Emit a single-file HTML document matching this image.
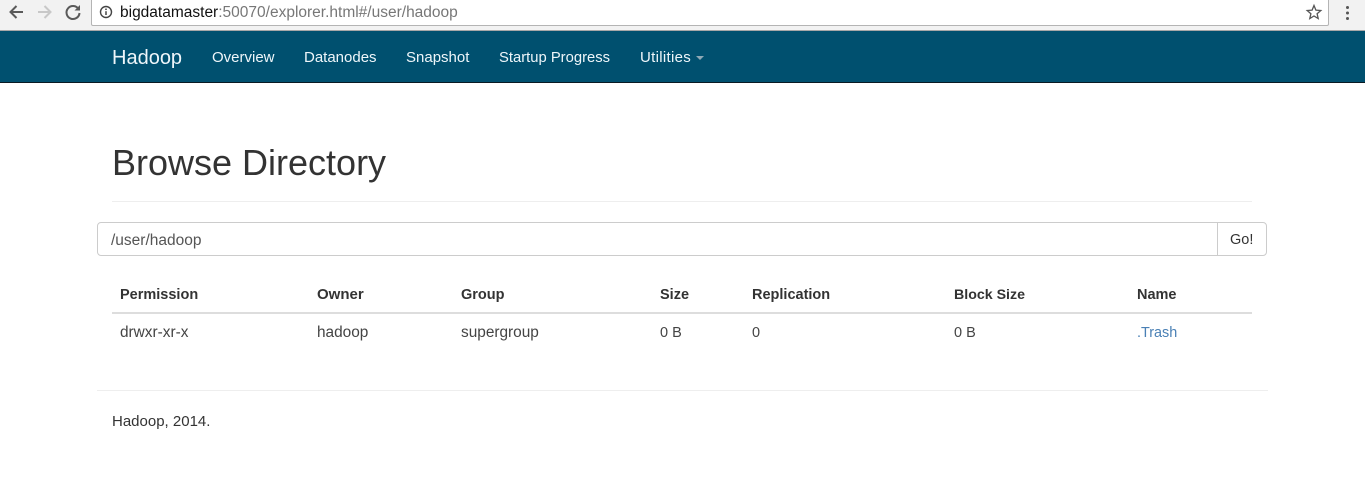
<!DOCTYPE html>
<html>
<head>
<meta charset="utf-8">
<style>
html,body{margin:0;padding:0;background:#fff;}
body{width:1365px;height:489px;overflow:hidden;position:relative;font-family:"Liberation Sans",sans-serif;color:#333;font-size:14px;}
.t{position:absolute;white-space:nowrap;line-height:20px;}
.b{position:absolute;}
.nav{color:#eef6fa;font-size:15px;top:48px;}
.th{font-weight:bold;top:285px;color:#333;font-size:14.5px;}
.td{top:323px;color:#444;font-size:15.4px;}
</style>
</head>
<body>
<div class="b" style="left:0;top:0;width:1365px;height:30px;background:#f2f2f2;"></div>
<div class="b" style="left:0;top:30px;width:1365px;height:1px;background:#a8a8a8;"></div>
<svg class="b" style="left:0;top:0" width="90" height="26" viewBox="0 0 90 26" fill="none">
<path d="M23 12H11M16.500 6L10.500 12L16.500 18" stroke="#5a5a5a" stroke-width="2"/>
<path d="M38 12H50M44.500 6L50.500 12L44.500 18" stroke="#c8c8c8" stroke-width="2"/>
<path d="M78.500 9A6.500 6.500 0 1 0 79.500 13" stroke="#5a5a5a" stroke-width="2"/>
<path d="M80 5V10.500H74.500Z" fill="#5a5a5a"/>
</svg>
<div class="b" style="left:91px;top:-2px;width:1236px;height:26px;background:#fff;border:1px solid #b4b4b4;border-radius:2px;"></div>
<svg class="b" style="left:98px;top:4px" width="16" height="16" viewBox="0 0 16 16" fill="none">
<circle cx="8" cy="8" r="5.500" stroke="#444" stroke-width="1.400"/>
<path d="M8 7.200V11" stroke="#444" stroke-width="1.500"/>
<circle cx="8" cy="5.300" r=".9" fill="#444"/>
</svg>
<div class="t" style="left:120px;top:3px;font-size:15.5px;color:#777;"><span style="color:#111">bigdatamaster</span>:50070/explorer.html#/user/hadoop</div>
<svg class="b" style="left:1305px;top:3px" width="18" height="18" viewBox="0 0 18 18" fill="none">
<path d="M9 2.500L10.900 7.100L15.800 7.500L12.100 10.700L13.200 15.500L9 13L4.800 15.500L5.900 10.700L2.200 7.500L7.100 7.100Z" stroke="#555" stroke-width="1.300"/>
</svg>
<div class="b" style="left:1346px;top:6px;width:3px;height:3px;border-radius:50%;background:#555;box-shadow:0 5.500px 0 #555,0 11px 0 #555;"></div>

<div class="b" style="left:0;top:31px;width:1365px;height:51px;background:#00506f;"></div>
<div class="b" style="left:0;top:82px;width:1365px;height:1px;background:#0a1a22;"></div>
<div class="t" style="left:112px;top:48px;font-size:20px;color:#eef6fa;">Hadoop</div>
<div class="t nav" style="left:212px;">Overview</div>
<div class="t nav" style="left:304px;">Datanodes</div>
<div class="t nav" style="left:406px;">Snapshot</div>
<div class="t nav" style="left:499px;font-size:14.800px;">Startup Progress</div>
<div class="t nav" style="left:640px;letter-spacing:.3px;">Utilities</div>
<div class="b" style="left:696px;top:56px;width:0;height:0;border-left:4px solid transparent;border-right:4px solid transparent;border-top:4px solid #8fa9b6;"></div>

<div class="t" style="left:112px;top:143px;font-size:36px;line-height:40px;color:#333;">Browse Directory</div>
<div class="b" style="left:112px;top:201px;width:1140px;height:1px;background:#eee;"></div>

<div class="b" style="left:97px;top:222px;width:1168px;height:32px;border:1px solid #ccc;border-radius:4px;"></div>
<div class="b" style="left:1217px;top:223px;width:1px;height:32px;background:#ccc;"></div>
<div class="t" style="left:111px;top:231px;color:#555;font-size:15.500px;">/user/hadoop</div>
<div class="t" style="left:1230px;top:230px;color:#333;font-size:14.500px;">Go!</div>

<div class="t th" style="left:120px;">Permission</div>
<div class="t th" style="left:317px;font-size:15px;">Owner</div>
<div class="t th" style="left:461px;">Group</div>
<div class="t th" style="left:660px;">Size</div>
<div class="t th" style="left:752px;">Replication</div>
<div class="t th" style="left:954px;font-size:14.200px;">Block Size</div>
<div class="t th" style="left:1137px;">Name</div>
<div class="b" style="left:112px;top:312px;width:1140px;height:2px;background:#ddd;"></div>

<div class="t td" style="left:120px;">drwxr-xr-x</div>
<div class="t td" style="left:317px;">hadoop</div>
<div class="t td" style="left:461px;">supergroup</div>
<div class="t td" style="left:660px;font-size:14.500px;">0 B</div>
<div class="t td" style="left:752px;font-size:14.500px;">0</div>
<div class="t td" style="left:954px;font-size:14.500px;">0 B</div>
<div class="t td" style="left:1137px;color:#4a80b5;font-size:14.400px;">.Trash</div>

<div class="b" style="left:97px;top:390px;width:1171px;height:1px;background:#eee;"></div>
<div class="t" style="left:112px;top:412px;color:#333;font-size:15px;">Hadoop, 2014.</div>
</body>
</html>
